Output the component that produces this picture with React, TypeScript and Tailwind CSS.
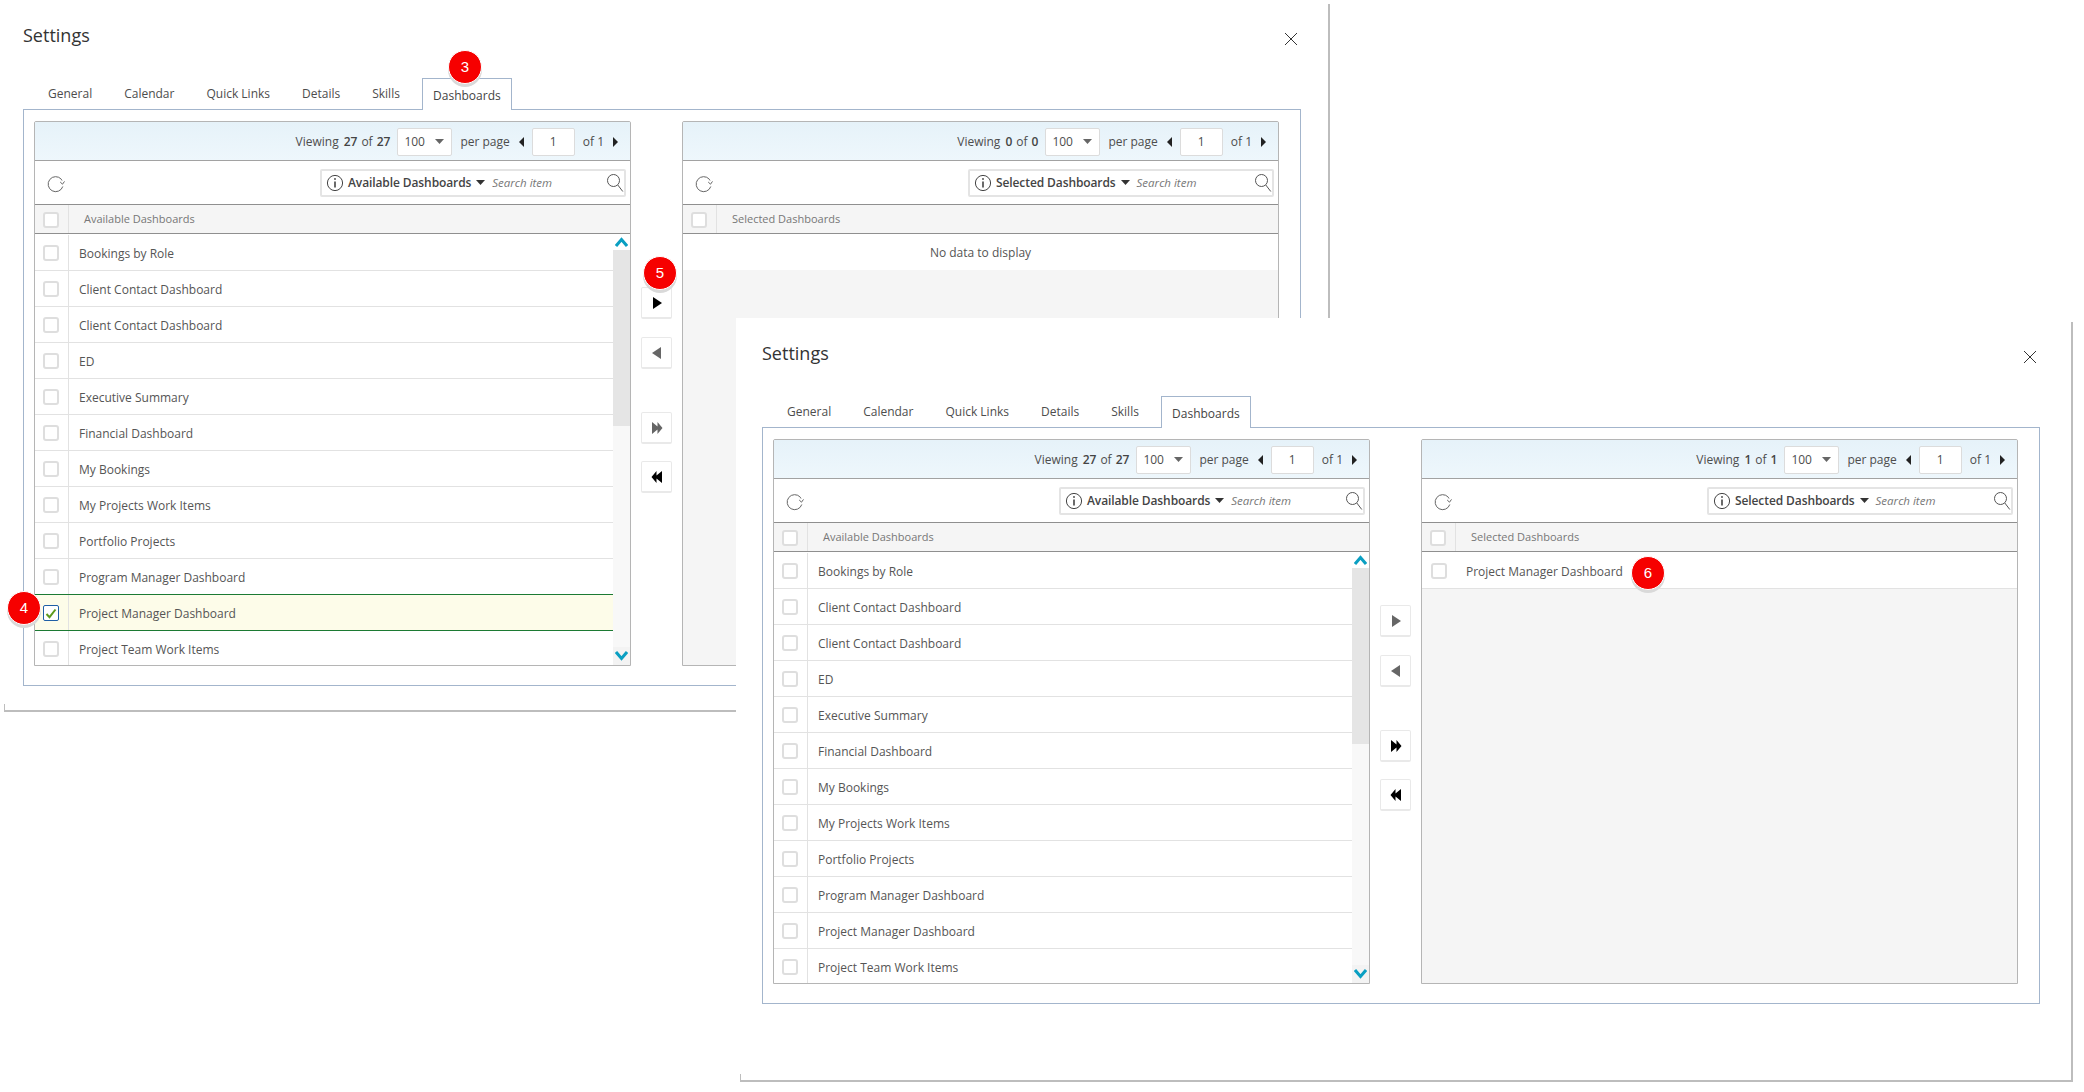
import React from "react";

const available = [
  "Bookings by Role",
  "Client Contact Dashboard",
  "Client Contact Dashboard",
  "ED",
  "Executive Summary",
  "Financial Dashboard",
  "My Bookings",
  "My Projects Work Items",
  "Portfolio Projects",
  "Program Manager Dashboard",
  "Project Manager Dashboard",
  "Project Team Work Items",
];

function Caret({ dir, className }: { dir: "left" | "right" | "down"; className?: string }) {
  if (dir === "down")
    return (
      <svg width="9" height="5" viewBox="0 0 9 5" className={className}>
        <path d="M0 0h9L4.5 5z" fill="currentColor" />
      </svg>
    );
  return (
    <svg width="5" height="10" viewBox="0 0 5 10" className={className}>
      <path d={dir === "left" ? "M5 0v10L0 5z" : "M0 0v10l5-5z"} fill="currentColor" />
    </svg>
  );
}

function Checkbox({ checked }: { checked?: boolean }) {
  return (
    <span
      className={
        checked
          ? "mr-[1px] mt-[1px] flex h-[16px] w-[16px] items-center justify-center rounded-[2px] border border-[#1f5fa6] bg-white"
          : "mr-[1px] mt-[1px] block h-[16px] w-[16px] rounded-[3px] border-2 border-[#dedede] bg-white"
      }
    >
      {checked && (
        <svg width="12" height="11" viewBox="0 0 12 11">
          <path d="M1.5 6l3 3.2L10.5 1.5" fill="none" stroke="#5c9a1c" strokeWidth="2" />
        </svg>
      )}
    </span>
  );
}

function Pager({ count, total }: { count: string; total: string }) {
  return (
    <div className="flex h-[39px] items-center justify-end border-b border-[#a2a2a2] bg-gradient-to-b from-[#e6f2f9] to-[#eef7fc] pr-[12px] pt-[1px] text-[12px] text-[#4d4d4d]">
      <span>Viewing</span>
      <span className="ml-[5px] font-semibold text-[#444]">{count}</span>
      <span className="ml-[4px]">of</span>
      <span className="ml-[4px] font-semibold text-[#444]">{total}</span>
      <span className="ml-[7px] flex h-[28px] w-[55px] items-center justify-between rounded-[2px] border border-[#dcdcdc] bg-white pl-[6px] pr-[7px] text-[#4d4d4d]">
        100
        <Caret dir="down" className="text-[#666]" />
      </span>
      <span className="ml-[8px]">per page</span>
      <Caret dir="left" className="ml-[9px] text-[#222]" />
      <span className="ml-[8px] flex h-[28px] w-[43px] items-center justify-center rounded-[2px] border border-[#dcdcdc] bg-white">
        1
      </span>
      <span className="ml-[8px]">of 1</span>
      <Caret dir="right" className="ml-[9px] text-[#222]" />
    </div>
  );
}

function SearchRow({ label }: { label: string }) {
  return (
    <div className="flex h-[44px] items-center justify-between border-b border-[#8f8f8f] bg-white pl-[12px] pr-[4px]">
      <svg width="18" height="18" viewBox="0 0 18 18" fill="none" stroke="#666" strokeWidth="1" className="mt-[2px]">
        <path d="M15.800 11.500A7.500 7.500 0 1 1 14.300 4.200 L15 5.500" />
        <path d="M13.200 7l2.300 2.200L17.500 6.400" />
      </svg>
      <div className="flex h-[28px] w-[306px] items-center rounded-[2px] border-2 border-[#e4e4e4] bg-white pl-[4px]">
        <svg width="18" height="18" viewBox="0 0 18 18" fill="none" stroke="#444" strokeWidth="1" className="shrink-0">
          <circle cx="9" cy="9" r="7.600" />
          <path d="M9 7.500v6" strokeWidth="1.600" />
          <circle cx="9" cy="5" r="0.900" fill="#444" stroke="none" />
        </svg>
        <span className="ml-[4px] whitespace-nowrap text-[12px] font-semibold tracking-[-0.1px] text-[#444]">{label}</span>
        <Caret dir="down" className="ml-[5px] shrink-0 text-[#333]" />
        <span className="ml-[7px] flex-1 text-[11.500px] italic text-[#777]">Search item</span>
        <svg width="18" height="20" viewBox="0 0 18 20" fill="none" stroke="#555" strokeWidth="1" className="shrink-0">
          <circle cx="7.500" cy="7.500" r="6" />
          <path d="M11.800 12l5 6.500" />
        </svg>
      </div>
    </div>
  );
}

function Header({ label }: { label: string }) {
  return (
    <div className="flex h-[29px] shrink-0 items-center border-b border-[#8f8f8f] bg-[#f5f5f5]">
      <div className="flex h-full w-[34px] items-center justify-center border-r border-[#e2e2e2]">
        <Checkbox />
      </div>
      <span className="pl-[15px] text-[11px] text-[#777]">{label}</span>
    </div>
  );
}

function Row({ label, checked, plain }: { label: string; checked?: boolean; plain?: boolean }) {
  return (
    <div
      className={
        checked
          ? "relative -mt-px flex h-[37px] shrink-0 items-center border-y border-[#1c7a33] bg-[#fdfce9]"
          : "flex h-[36px] shrink-0 items-center border-b border-[#e2e2e2] bg-white"
      }
    >
      <div
        className={
          (plain ? "" : "border-r border-[#e2e2e2] ") + "flex h-full w-[34px] shrink-0 items-center justify-center"
        }
      >
        <Checkbox checked={checked} />
      </div>
      <span className="pl-[10px] pt-[2px] text-[12px] text-[#555]">{label}</span>
    </div>
  );
}

function AvailableGrid({ checkedIndex }: { checkedIndex?: number }) {
  return (
    <div className="flex h-[545px] w-[597px] shrink-0 flex-col overflow-hidden rounded-t-[2px] border border-[#b5b5b5] bg-white">
      <Pager count="27" total="27" />
      <SearchRow label="Available Dashboards" />
      <Header label="Available Dashboards" />
      <div className="flex min-h-0 flex-1">
        <div className="flex min-w-0 flex-1 flex-col overflow-hidden">
          <div className="h-px shrink-0" />
          {available.map((name, i) => (
            <Row key={i} label={name} checked={i === checkedIndex} />
          ))}
        </div>
        <div className="flex w-[17px] shrink-0 flex-col items-center bg-[#f8f8f8]">
          <div className="flex h-[16px] w-full shrink-0 items-center justify-center bg-white">
            <svg width="13" height="10" viewBox="0 0 13 10">
              <path d="M1 9l5.500-6.500L12 9" fill="none" stroke="#0a9fc2" strokeWidth="3" />
            </svg>
          </div>
          <div className="h-[176px] w-full shrink-0 bg-[#e5e5e5]" />
          <div className="flex-1" />
          <div className="flex h-[18px] w-full shrink-0 items-center justify-center bg-[#f3f3f3]">
            <svg width="13" height="10" viewBox="0 0 13 10">
              <path d="M1 1l5.500 6.500L12 1" fill="none" stroke="#0a9fc2" strokeWidth="3" />
            </svg>
          </div>
        </div>
      </div>
    </div>
  );
}

function SelectedGrid({ count, total, item }: { count: string; total: string; item?: string }) {
  return (
    <div className="flex h-[545px] w-[597px] shrink-0 flex-col overflow-hidden rounded-t-[2px] border border-[#b5b5b5] bg-[#f5f5f5]">
      <Pager count={count} total={total} />
      <SearchRow label="Selected Dashboards" />
      <Header label="Selected Dashboards" />
      <div className="h-px shrink-0 bg-white" />
      {item ? (
        <Row label={item} plain />
      ) : (
        <div className="flex h-[35px] shrink-0 items-center justify-center bg-white text-[12px] text-[#555]">
          No data to display
        </div>
      )}
    </div>
  );
}

function ArrowButton({ kind, active, className }: { kind: "one" | "back" | "all" | "none"; active?: boolean; className?: string }) {
  const fill = active ? "#000" : "#666";
  return (
    <div
      className={
        "flex h-[32px] w-[31px] items-center justify-center rounded-[2px] border border-[#e9e9e9] border-b-2 bg-white " +
        (className ?? "")
      }
    >
      <svg width="12" height="14" viewBox="0 0 12 14">
        {kind === "one" && <path d="M2 1v12l9-6z" fill={fill} />}
        {kind === "back" && <path d="M10 1v12L1 7z" fill={fill} />}
        {kind === "all" && <path d="M1 1v12l5.500-4.500V13L11.500 7 6.500 1v4.500z" fill={fill} />}
        {kind === "none" && <path d="M11 1v12L5.500 8.500V13L.5 7l5-6v4.500z" fill={fill} />}
      </svg>
    </div>
  );
}

function Tabs() {
  return (
    <div className="relative z-10 -mb-px flex h-[32px] items-stretch pl-[9px] text-[12px] text-[#4d4d4d]">
      {["General", "Calendar", "Quick Links", "Details", "Skills"].map((t) => (
        <span key={t} className="flex items-center px-[16px]">
          {t}
        </span>
      ))}
      <span className="ml-[6px] flex w-[90px] items-center justify-center border border-b-0 border-[#a3b5cc] bg-white pt-[2px] font-medium text-[#444]">
        Dashboards
      </span>
    </div>
  );
}

function Close() {
  return (
    <svg width="14" height="14" viewBox="0 0 14 14" className="mt-[9px]" stroke="#333" strokeWidth="1" fill="none">
      <path d="M1 1l12 12M13 1L1 13" />
    </svg>
  );
}

function Window({ className, children, frame, tick }: { className: string; children: React.ReactNode; frame: string; tick: string }) {
  return (
    <div className={"absolute bg-white pl-[26px] pt-[23px] " + className}>
      <div className={"pointer-events-none absolute right-0 top-[4px] border-b-2 border-r-2 border-[#bdbdbd] " + frame} />
      <div className={"pointer-events-none absolute bottom-[2px] h-[6px] border-l border-[#bdbdbd] " + tick} />
      <div className="flex h-[55px] w-[1278px] items-start justify-between pr-[3px]">
        <h1 className="text-[18px] leading-[24px] text-[#333]">Settings</h1>
        <Close />
      </div>
      <Tabs />
      {children}
    </div>
  );
}

function Panel({ children }: { children: React.ReactNode }) {
  return (
    <div className="flex h-[577px] w-[1278px] items-start border border-[#a3b5cc] bg-white pl-[10px] pt-[11px]">{children}</div>
  );
}

function Transfer({ first, second }: { first?: boolean; second?: boolean }) {
  return (
    <div className="ml-[10px] mr-[10px] flex w-[31px] shrink-0 flex-col pt-[166px]">
      <ArrowButton kind="one" active={first} />
      <ArrowButton kind="back" className="mt-[18px]" />
      <ArrowButton kind="all" active={second} className="mt-[43px]" />
      <ArrowButton kind="none" active className="mt-[17px]" />
    </div>
  );
}

function Badge({ n, className }: { n: number; className: string }) {
  return (
    <div
      className={
        "absolute z-20 flex h-[34px] w-[34px] items-center justify-center rounded-full border border-white bg-[#f60000] font-['Liberation_Sans',sans-serif] text-[15px] text-white shadow-[0_3px_0_#d9d9d9] " +
        className
      }
    >
      {n}
    </div>
  );
}

export default function App() {
  return (
    <div className="relative h-[1092px] w-[2084px] overflow-hidden bg-white font-['Open_Sans',sans-serif]">
      <Window className="left-[-3px] top-0 h-[712px] w-[1333px]" frame="left-[7px] h-[708px]" tick="left-[7px]">
        <Panel>
          <AvailableGrid checkedIndex={10} />
          <Transfer first />
          <SelectedGrid count="0" total="0" />
        </Panel>
      </Window>
      <Window className="left-[736px] top-[318px] h-[764px] w-[1337px]" frame="left-[4px] h-[760px]" tick="left-[4px]">
        <Panel>
          <AvailableGrid />
          <Transfer second />
          <SelectedGrid count="1" total="1" item="Project Manager Dashboard" />
        </Panel>
      </Window>
      <Badge n={3} className="left-[448px] top-[50px]" />
      <Badge n={5} className="left-[643px] top-[256px]" />
      <Badge n={4} className="left-[7px] top-[591px]" />
      <Badge n={6} className="left-[1631px] top-[556px]" />
    </div>
  );
}
